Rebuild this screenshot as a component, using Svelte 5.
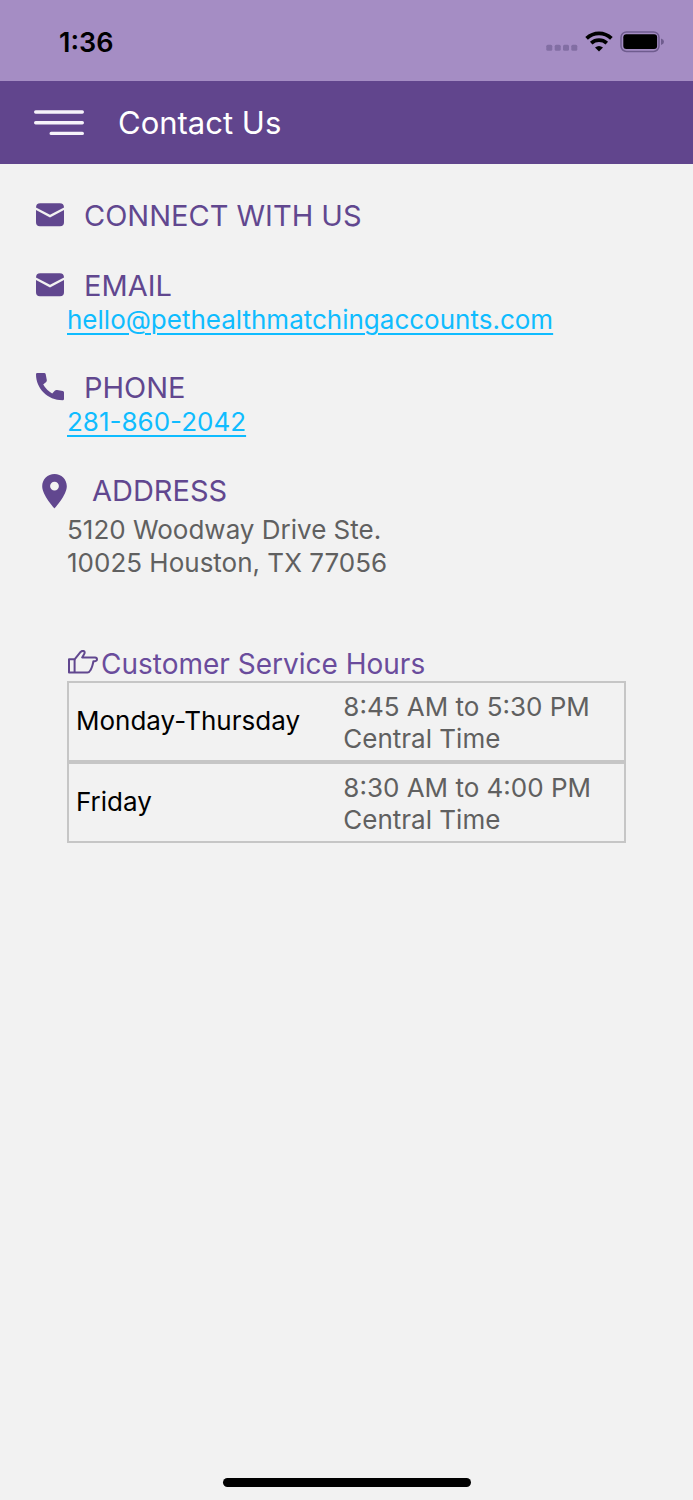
<script lang="ts">
	type Hours = {
		day: string;
		time: string;
		zone: string;
	};

	const email = 'hello@pethealthmatchingaccounts.com';
	const phone = '281-860-2042';

	const hours: Hours[] = [
		{ day: 'Monday-Thursday', time: '8:45 AM to 5:30 PM', zone: 'Central Time' },
		{ day: 'Friday', time: '8:30 AM to 4:00 PM', zone: 'Central Time' }
	];
</script>

<svelte:head>
	<title>Contact Us</title>
</svelte:head>

{#snippet mailIcon()}
	<svg class="icon" width="30" height="30" viewBox="0 0 30 30" aria-hidden="true">
		<path d="M1 6.600Q1 2.300 5.200 2.300H24.800Q29 2.300 29 6.600L15 13.800Z" />
		<path d="M1 9L15 16.400L29 9V21.200Q29 25.200 25 25.200H5Q1 25.200 1 21.200Z" />
	</svg>
{/snippet}

<div class="screen">
	<div class="status-bar">
		<span class="clock">1:36</span>
		<div class="status-icons">
			<svg width="32" height="24" viewBox="0 0 32 24" aria-hidden="true">
				<g fill="#826ea3">
					<rect x="0.300" y="13.700" width="6" height="6" rx="1.500" />
					<rect x="8.700" y="13.700" width="6" height="6" rx="1.500" />
					<rect x="17" y="13.700" width="6" height="6" rx="1.500" />
					<rect x="25.300" y="13.700" width="6" height="6" rx="1.500" />
				</g>
			</svg>
			<svg width="28" height="24" viewBox="0 0 28 24" aria-hidden="true">
				<g fill="none" stroke="#000" stroke-width="3.800">
					<path d="M1.600 7.400Q7 2.400 14 2.400T26.400 7.400" />
					<path d="M6.200 12.100Q9.600 9.200 14 9.200T21.800 12.100" />
				</g>
				<path d="M10 16.400Q14 13.400 18 16.400L14 20.400Z" />
			</svg>
			<svg width="44" height="24" viewBox="0 0 44 24" aria-hidden="true">
				<rect x="1" y="0.900" width="38" height="19.600" rx="5.500" fill="none" stroke="#6f5c8e" stroke-width="1.500" />
				<rect x="3.300" y="3.300" width="33.800" height="14.800" rx="3" />
				<path d="M41 7.500Q44 8.500 44 10.800T41 14.100Z" fill="#6f5c8e" />
			</svg>
		</div>
	</div>

	<header>
		<button class="menu" aria-label="Menu">
			<svg width="50" height="26" viewBox="0 0 50 26" aria-hidden="true">
				<g stroke="#f6f3fa" stroke-width="3.400" stroke-linecap="round">
					<path d="M1.700 2H48.300M1.700 12.800H48.300M17.200 23.400H48.300" />
				</g>
			</svg>
		</button>
		<h1>Contact Us</h1>
	</header>

	<main>
		<section>
			<h2>{@render mailIcon()}CONNECT WITH US</h2>
		</section>

		<section>
			<h2>{@render mailIcon()}EMAIL</h2>
			<a href="mailto:{email}">{email}</a>
		</section>

		<section>
			<h2>
				<svg class="icon" width="30" height="30" viewBox="0 0 30 30" aria-hidden="true">
					<path d="M2.200 0H9.200Q10.400 0 10.700 1.200L11.800 7Q12 8.200 11.200 9L8.200 11.600Q11.600 17.500 17.200 20.400L20 17.600Q20.800 16.800 22 17L27.800 18.100Q29 18.400 29 19.600V25.900Q29 27.300 27.600 27.300C12.500 27.300 1 15.500 1 1.300Q1 0 2.200 0Z" />
				</svg>PHONE
			</h2>
			<a href="tel:{phone}">{phone}</a>
		</section>

		<section>
			<h2 class="address-title">
				<svg class="icon" width="38" height="36" viewBox="0 0 38 36" aria-hidden="true">
					<path fill-rule="evenodd" d="M19.500 1C12.600 1 7.200 6.300 7.200 13.200C7.200 22 19.500 35.400 19.500 35.400S31.800 22 31.800 13.200C31.800 6.300 26.400 1 19.500 1ZM19.500 8.700A4.400 4.400 0 1 1 19.500 17.500A4.400 4.400 0 1 1 19.500 8.700Z" />
				</svg>ADDRESS
			</h2>
			<address>
				5120 Woodway Drive Ste.<br />
				10025 Houston, TX 77056
			</address>
		</section>

		<section class="hours">
			<h3>
				<svg width="32" height="28" viewBox="0 0 32 28" aria-hidden="true">
					<g fill="none" stroke="#61478f" stroke-width="2" stroke-linejoin="round">
						<path d="M2 9.300H7.600L13.600 1.900Q15.700 0 17.400 1.600Q18 2.600 17.200 3.900L15.200 7.400H28Q30 7.600 30 9.300Q29.900 11.100 28 11.200H26.400Q25.900 14 25.200 16.200T23.300 20.400Q22.200 22.600 20.400 22.600H2Z" />
						<path d="M7.600 9.300V22.600" />
					</g>
				</svg>Customer Service Hours
			</h3>
			<table>
				<tbody>
					{#each hours as row}
						<tr>
							<th scope="row">{row.day}</th>
							<td>{row.time}<br />{row.zone}</td>
						</tr>
					{/each}
				</tbody>
			</table>
		</section>
	</main>

	<div class="home-indicator"></div>
</div>

<style>
	:global(body) {
		margin: 0;
		background: #f2f2f2;
	}

	.screen {
		display: flex;
		flex-direction: column;
		min-height: 100vh;
		font-family: Inter, 'Liberation Sans', sans-serif;
		font-size: 26px;
		line-height: 32px;
		color: #606060;
		background: #f2f2f2;
	}

	.status-bar {
		display: flex;
		align-items: center;
		justify-content: space-between;
		height: 81px;
		padding: 4px 29px 0 59px;
		box-sizing: border-box;
		background: #a58dc4;
	}

	.clock {
		font-size: 27px;
		font-weight: 600;
		color: #000;
	}

	.status-icons {
		display: flex;
		align-items: center;
		gap: 7px;
	}

	header {
		display: flex;
		align-items: center;
		gap: 34px;
		height: 83px;
		padding: 0 34px;
		background: #61458d;
	}

	.menu {
		display: flex;
		padding: 0;
		border: 0;
		background: none;
		cursor: pointer;
	}

	h1 {
		margin: 0;
		font-size: 31px;
		line-height: 40px;
		font-weight: 400;
		color: #fff;
	}

	main {
		display: flex;
		flex: 1;
		flex-direction: column;
		gap: 34px;
		padding: 34px 67px 34px 35px;
	}

	section {
		padding-left: 32px;
	}

	h2 {
		display: flex;
		align-items: center;
		gap: 19px;
		margin: 0 0 0 -32px;
		font-size: 29px;
		line-height: 36px;
		font-weight: 400;
		color: #61478f;
	}

	.address-title {
		line-height: 38px;
	}

	.icon {
		fill: #61478f;
	}

	a {
		display: inline-block;
		color: #0fbcff;
		text-decoration: underline;
		text-decoration-thickness: 2px;
		text-underline-offset: 4px;
	}

	address {
		margin-top: 3px;
		font-style: normal;
		line-height: 33px;
	}

	.hours {
		margin-top: 34px;
	}

	h3 {
		display: flex;
		align-items: center;
		gap: 2px;
		margin: 0;
		font-size: 28px;
		line-height: 34px;
		font-weight: 400;
		color: #6a4c9c;
	}

	table {
		width: 100%;
		border-spacing: 0;
		table-layout: fixed;
	}

	th,
	td {
		padding: 8px 8px 5px;
		border: solid #c6c6c6;
		text-align: left;
	}

	th {
		width: 48%;
		box-sizing: border-box;
		padding: 6px 0 8px 7px;
		border-width: 2px 0 2px 2px;
		font-weight: 400;
		color: #000;
	}

	td {
		border-width: 2px 2px 2px 0;
	}

	.home-indicator {
		align-self: center;
		width: 248px;
		height: 9px;
		margin-bottom: 13px;
		border-radius: 5px;
		background: #000;
	}
</style>
